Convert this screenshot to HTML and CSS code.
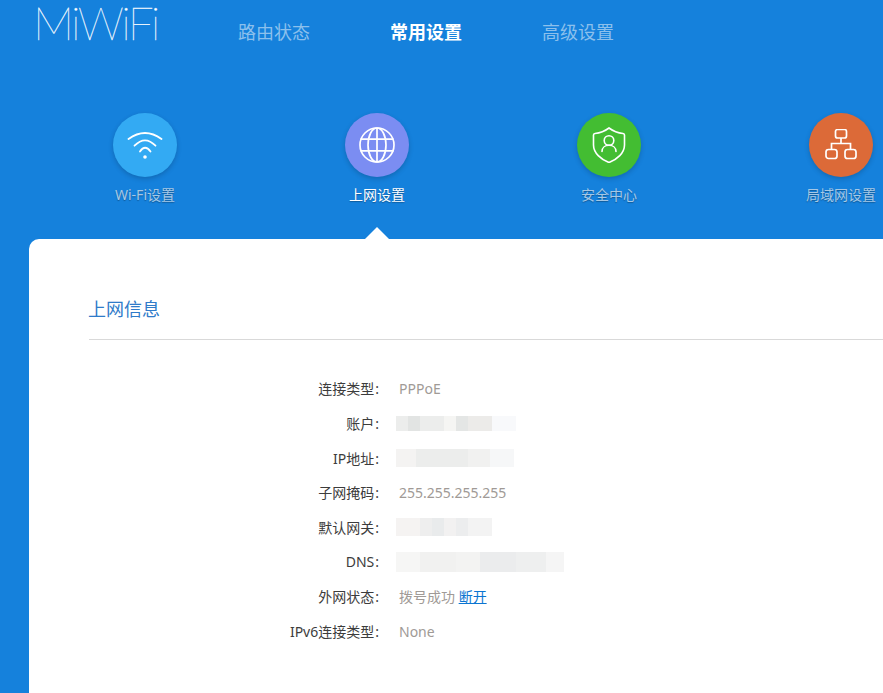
FILE: index.html
```html
<!DOCTYPE html>
<html lang="zh-CN">
<head>
  <meta charset="UTF-8">
  <title>MiWiFi</title>
  <link rel="stylesheet" href="styles.css">
</head>
<body>
<div class="header">
  <div class="logo">MiWiFi</div>
  <div class="nav">
    <a class="nav-item">路由状态</a>
    <a class="nav-item active">常用设置</a>
    <a class="nav-item">高级设置</a>
  </div>
</div>
<div class="tabs">
  <div class="tab">
    <div class="circle wifi">
      <svg width="36" height="36" viewBox="0 0 36 36" fill="none" stroke="#fff" stroke-width="1.8" stroke-linecap="round">
        <path d="M1.500 12Q18 0 34.500 12"/>
        <path d="M7.500 18.700Q18 7.900 28.500 18.700"/>
        <path d="M13 24.500Q18 17 23.500 24.500"/>
        <circle cx="18" cy="30" r="1.800" fill="#fff" stroke="none"/>
      </svg>
    </div>
    <div class="tab-label">Wi-Fi设置</div>
  </div>
  <div class="tab active">
    <div class="circle net">
      <svg width="36" height="36" viewBox="0 0 36 36" fill="none" stroke="#fff" stroke-width="1.7">
        <circle cx="18" cy="18" r="17"/>
        <ellipse cx="18" cy="18" rx="9" ry="17"/>
        <path d="M18 1V35M1.500 12.200H34.500M1.500 23.800H34.500"/>
      </svg>
    </div>
    <div class="tab-label">上网设置</div>
  </div>
  <div class="tab">
    <div class="circle safe">
      <svg width="36" height="36" viewBox="0 0 36 36" fill="none" stroke="#fff" stroke-width="1.6" stroke-linecap="round">
        <path d="M18 1C22 4 27 6 32 6.500C33.200 6.600 33.500 7.200 33.500 8V18C33.500 26 26 32.500 18 35.500C10 32.500 2.500 26 2.500 18V8C2.500 7.200 2.800 6.600 4 6.500C9 6 14 4 18 1Z"/>
        <circle cx="18" cy="13.500" r="4.800"/>
        <path d="M11 24.500C11 20.800 14 18.300 18 18.300C22 18.300 25 20.800 25 24.500"/>
      </svg>
    </div>
    <div class="tab-label">安全中心</div>
  </div>
  <div class="tab">
    <div class="circle lan">
      <svg width="32" height="32" viewBox="0 0 32 32" fill="none" stroke="#fff" stroke-width="1.7">
        <rect x="10.500" y="0.500" width="11" height="8.500" rx="2"/>
        <rect x="1" y="20.500" width="11" height="9" rx="2.500"/>
        <rect x="20" y="20.500" width="11" height="9" rx="2.500"/>
        <path d="M16 9V14.500M6.500 20.500V14.500H25.500V20.500"/>
      </svg>
    </div>
    <div class="tab-label">局域网设置</div>
  </div>
</div>
<div class="card">
  <h3 class="card-title">上网信息</h3>
  <div class="info">
    <div class="info-row"><span class="info-label">连接类型<span class="colon">:</span></span><span class="info-value">PPPoE</span></div>
    <div class="info-row"><span class="info-label">账户<span class="colon">:</span></span><span class="mosaic mosaic-account"></span></div>
    <div class="info-row"><span class="info-label">IP地址<span class="colon">:</span></span><span class="mosaic mosaic-ip"></span></div>
    <div class="info-row"><span class="info-label">子网掩码<span class="colon">:</span></span><span class="info-value">255.255.255.255</span></div>
    <div class="info-row"><span class="info-label">默认网关<span class="colon">:</span></span><span class="mosaic mosaic-gateway"></span></div>
    <div class="info-row"><span class="info-label">DNS<span class="colon">:</span></span><span class="mosaic mosaic-dns"></span></div>
    <div class="info-row"><span class="info-label">外网状态<span class="colon">:</span></span><span class="info-value">拨号成功 <a class="link">断开</a></span></div>
    <div class="info-row"><span class="info-label">IPv6连接类型<span class="colon">:</span></span><span class="info-value">None</span></div>
  </div>
</div>
</body>
</html>
```

FILE: styles.css
```css
html, body {
  margin: 0;
  height: 100%;
  overflow: hidden;
}
body {
  background: #1581dc;
  font-family: "Noto Sans", "Noto Sans CJK SC", sans-serif;
  font-size: 14px;
}
.header {
  display: flex;
  height: 64px;
  padding-left: 33px;
}
.logo {
  width: 205px;
  font-family: Lato, sans-serif;
  font-weight: 100;
  font-size: 46px;
  line-height: 46px;
  letter-spacing: -2.7px;
  color: #fff;
  -webkit-text-stroke: 0.3px #e6f2fc;
}
.nav {
  display: flex;
  gap: 80px;
  font-family: "Noto Sans CJK SC", sans-serif;
  font-size: 18px;
  line-height: 63px;
}
.nav-item {
  color: #8cc0ec;
}
.nav-item.active {
  color: #fff;
  font-weight: bold;
}
.tabs {
  display: flex;
  width: 928px;
  height: 175px;
  margin-left: 29px;
  padding-top: 49px;
  box-sizing: border-box;
}
.tab {
  position: relative;
  width: 232px;
  height: 126px;
  display: flex;
  flex-direction: column;
  align-items: center;
}
.tab.active::after { /* little arrow pointing at the card */
  content: "";
  position: absolute;
  left: 104px;
  top: 114px;
  border-left: 12px solid transparent;
  border-right: 12px solid transparent;
  border-bottom: 12px solid #fff;
}
.circle {
  width: 64px;
  height: 64px;
  border-radius: 50%;
  display: flex;
  align-items: center;
  justify-content: center;
  box-shadow: 0 2px 5px rgba(0, 0, 0, 0.18);
}
.wifi { background: #33aaf3; }
.net { background: #7b8df2; }
.safe { background: #43bd32; }
.lan { background: #dc6a38; }
.tab-label {
  margin-top: 8px;
  line-height: 20px;
  color: #a5c8e6;
  text-shadow: 0 1px 1px rgba(0, 0, 0, 0.3);
}
.tab.active .tab-label {
  color: #fff;
}
.card {
  width: 900px;
  height: 500px;
  margin-left: 29px;
  padding: 0 0 0 60px;
  box-sizing: border-box;
  background: #fff;
  border-radius: 10px 0 0 0;
}
.card-title {
  margin: 0 0 31px;
  padding-top: 56px;
  height: 44px;
  border-bottom: 1px solid #d9d9d9;
  font-weight: normal;
  font-size: 18px;
  line-height: 28px;
  text-indent: -1px;
  color: #2f7bc9;
}
.info-row {
  display: grid;
  grid-template-columns: 292px 1fr;
  column-gap: 18px;
  align-items: center;
  height: 34.7px;
}
.info-label {
  text-align: right;
  color: #3c3c3c;
}
.colon {
  margin-left: 1px;
  margin-right: 2px;
}
.info-value {
  color: #a09a96;
}
.link {
  color: #0b75d1;
  text-decoration: underline;
}
.mosaic {
  display: block;
  height: 15px;
  margin-left: -3px;
  filter: blur(0.6px);
}
.mosaic-account {
  width: 120px;
  background: linear-gradient(90deg, #ecedec 0 12px, #e2e4e3 12px 24px, #ecedec 24px 48px, #f5f5f3 48px 60px, #e4e6e5 60px 72px, #ecebe9 72px 96px, #f8f9fb 96px 120px);
}
.mosaic-ip {
  width: 118px;
  height: 18px;
  background: linear-gradient(90deg, #f4f3f2 0 20px, #ecedec 20px 72px, #f1f1f0 72px 94px, #f6f7f8 94px 118px);
}
.mosaic-gateway {
  width: 96px;
  height: 18px;
  background: linear-gradient(90deg, #f5f3f2 0 24px, #eeeeee 24px 36px, #e9ebec 36px 48px, #f2f1f1 48px 60px, #ecedee 60px 72px, #f3f3f3 72px 96px);
}
.mosaic-dns {
  width: 168px;
  height: 20px;
  background: linear-gradient(90deg, #f6f6f5 0 24px, #f1f1f0 24px 60px, #f3f3f2 60px 84px, #ebeced 84px 120px, #eeefef 120px 150px, #f5f5f5 150px 168px);
}
```
